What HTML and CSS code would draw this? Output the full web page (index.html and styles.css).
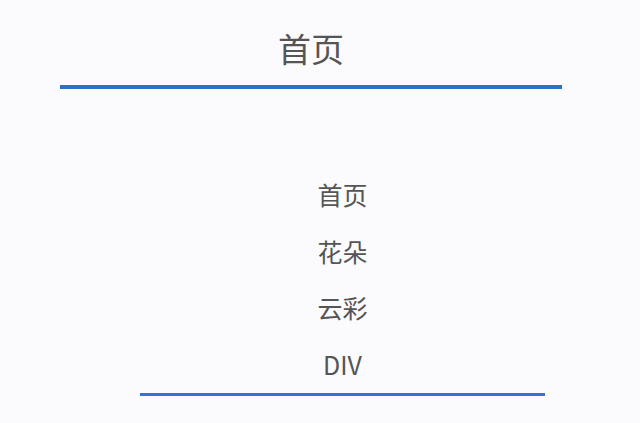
FILE: index.html
```html
<!DOCTYPE html>
<html>
<head>
<meta charset="utf-8">
<link rel="stylesheet" href="styles.css">
</head>
<body>
<div class="header">
  <h1 class="title">首页</h1>
</div>
<ul class="menu">
  <li>首页</li>
  <li>花朵</li>
  <li>云彩</li>
  <li>DIV</li>
</ul>
</body>
</html>
```
FILE: styles.css
```css
html, body {
  margin: 0;
  padding: 0;
  background: #fbfafc;
  font-family: "Noto Sans CJK SC", "Noto Sans", sans-serif;
  color: #555555;
}
.header {
  margin-left: 60px;
  width: 502px;
  padding-top: 26px;
  border-bottom: 4px solid #2b6fd0;
}
.title {
  margin: 0;
  font-size: 33px;
  font-weight: normal;
  line-height: 44px;
  text-align: center;
  height: 59px;
}
.menu {
  list-style: none;
  margin: 77px 0 0 140px;
  padding: 0;
  width: 405px;
  border-bottom: 3px solid #3a6fd8;
}
.menu li {
  font-size: 25px;
  line-height: 56.7px;
  text-align: center;
}
```
